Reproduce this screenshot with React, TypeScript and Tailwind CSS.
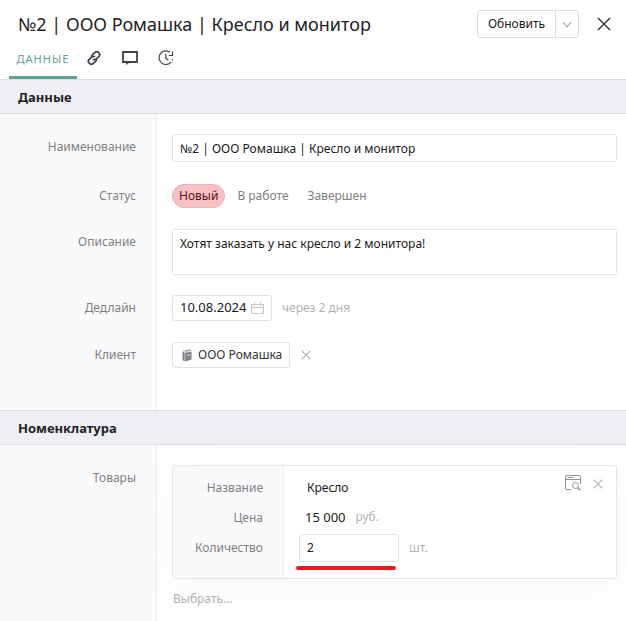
import React, { useState } from "react";

const font = "font-['Noto_Sans','Open_Sans',sans-serif]";

function CrossIcon({ size, stroke }: { size: number; stroke: number }) {
  return (
    <svg width={size} height={size} viewBox="0 0 14 14" fill="none" stroke="currentColor" strokeWidth={stroke} aria-hidden="true">
      <path d="M1 1l12 12M13 1L1 13" />
    </svg>
  );
}

function LinkIcon() {
  return (
    <svg width="16" height="16" viewBox="0 0 16 16" fill="none" stroke="#3d434b" strokeWidth="1.7" strokeLinecap="round" aria-hidden="true">
      <g transform="rotate(-42 8 8)">
        <path d="M6.600 8.800A2.900 2.900 0 0 0 9 10.200h3.200a2.900 2.900 0 0 0 0-5.800H9.200A2.900 2.900 0 0 0 7.200 5.300" />
        <path d="M9.400 7.200A2.900 2.900 0 0 0 7 5.800H3.800a2.900 2.900 0 0 0 0 5.800h3a2.900 2.900 0 0 0 2-.9" />
      </g>
    </svg>
  );
}

function ChatIcon() {
  return (
    <svg width="16" height="16" viewBox="0 0 16 16" fill="none" stroke="#3d434b" strokeWidth="1.800" aria-hidden="true">
      <path d="M1 2h14v10H1z" />
      <path d="M4 12h4l-3.500 3z" fill="#3d434b" stroke="none" />
    </svg>
  );
}

function ClockIcon() {
  return (
    <svg width="16" height="16" viewBox="0 0 16 16" fill="none" stroke="#3d434b" strokeWidth="1.200" aria-hidden="true">
      <path d="M12 2.300A6.800 6.800 0 1 0 13.300 11.800" />
      <path d="M14.200 10.300l.4-1.200" />
      <path d="M14.500 1.500v4h-3.700M7.800 4v4.500l2.500 1.500" />
    </svg>
  );
}

function CalendarIcon() {
  return (
    <svg width="13" height="13" viewBox="0 0 13 13" fill="none" stroke="#c6c6c6" className="shrink-0" aria-hidden="true">
      <path d="M.5 2.500h12v9H.5zM.5 5.500h12M3.500 0v4M9.500 0v4" />
    </svg>
  );
}

function BookIcon() {
  return (
    <svg width="10" height="13" viewBox="0 0 10 13" className="shrink-0" aria-hidden="true">
      <path d="M3.200 3.800L9.500 2.500v8L3.200 12.500z" fill="#7e8286" />
      <path d="M.5 2.500l2.200 1.300v8.700L.5 11z" fill="#7e8286" />
      <path d="M.8 2.200L6.500.8 8.500 1.400 3.200 2.900" fill="none" stroke="#8e9296" strokeWidth=".8" />
      <path d="M5.500 5.600l2-.5v1.500l-2 .5z" fill="#e8e8e8" />
    </svg>
  );
}

function PreviewIcon() {
  return (
    <svg width="16" height="16" viewBox="0 0 16 16" fill="none" stroke="#8f9296" aria-hidden="true">
      <path d="M6.500 14.500H2A1.500 1.500 0 0 1 .5 13V2A1.500 1.500 0 0 1 2 .5h12A1.500 1.500 0 0 1 15.500 2v7M.5 4.500h15M2.500 2.500h6" />
      <circle cx="10.500" cy="10.500" r="3" />
      <path d="M12.700 12.700l2.600 2.600" strokeWidth="1.500" />
    </svg>
  );
}

function SectionTitle({ children }: { children: React.ReactNode }) {
  return (
    <h2 className="h-[35px] border-y border-[#dddee0] bg-[#eeeff4] px-[18px] text-[13px] leading-[34px] font-bold text-[#222]">
      {children}
    </h2>
  );
}

function Row({ label, id, pad, children }: { label: string; id?: string; pad: string; children: React.ReactNode }) {
  return (
    <div className="flex">
      <div className={`w-[157px] shrink-0 border-r border-[#ebecf2] bg-[#f9fafc] pr-5 text-right leading-[26px] text-[#808080] ${pad}`}>
        <label htmlFor={id}>{label}</label>
      </div>
      <div className={`min-w-0 flex-1 pr-[9px] pl-[15px] ${pad}`}>{children}</div>
    </div>
  );
}

function CardLabel({ children, id }: { children: React.ReactNode; id?: string }) {
  return (
    <label htmlFor={id} className="block h-[30px] leading-[30px] text-[#808080]">
      {children}
    </label>
  );
}

export default function App() {
  const [status, setStatus] = useState("Новый");
  return (
    <main className={`min-h-screen overflow-hidden bg-white text-xs text-[#1a1a1a] ${font}`}>
      <header className="flex h-12 items-center pr-[15px] pl-[18px]">
        <h1 className="min-w-0 flex-1 truncate text-lg leading-7 text-[#222]">№2 | ООО Ромашка | Кресло и монитор</h1>
        <div className="flex h-7 shrink-0 rounded-[3px] border border-[#dcdcdc]">
          <button type="button" className="w-[78px] border-r border-[#dcdcdc]">Обновить</button>
          <button type="button" aria-label="Ещё" className="flex w-[22px] items-center justify-center text-[#888]">
            <svg width="10" height="7" viewBox="0 0 10 7" fill="none" stroke="currentColor" aria-hidden="true">
              <path d="M1 1l4 5 4-5" />
            </svg>
          </button>
        </div>
        <button type="button" aria-label="Закрыть" className="ml-[18px] text-[#333]">
          <CrossIcon size={14} stroke={1.4} />
        </button>
      </header>
      <nav className="flex h-[31px] items-start pl-[9px]">
        <button type="button" className="h-[31px] w-[68px] border-b-3 border-[#5ba298] pb-1.5 text-[11px] tracking-[1px] text-[#5ba298]">ДАННЫЕ</button>
        <div className="ml-[9px] flex gap-5 pt-0.5">
          <button type="button" aria-label="Ссылки"><LinkIcon /></button>
          <button type="button" aria-label="Комментарии"><ChatIcon /></button>
          <button type="button" aria-label="История"><ClockIcon /></button>
        </div>
      </nav>

      <section>
        <SectionTitle>Данные</SectionTitle>
        <Row label="Наименование" id="name" pad="pt-5">
          <input id="name" defaultValue="№2 | ООО Ромашка | Кресло и монитор" className="block h-7 w-full rounded-[3px] border border-[#e2e2e2] px-[7px] outline-none" />
        </Row>
        <Row label="Статус" pad="pt-[21px]">
          <div className="flex h-[26px] items-center gap-[5px]">
            {["Новый", "В работе", "Завершен"].map((s) => (
              <button
                key={s}
                type="button"
                aria-pressed={s === status}
                onClick={() => setStatus(s)}
                className={s === status ? "h-6 rounded-full border border-[#eeb0b3] bg-[#f8c2c4] px-1.5 text-[#5c0f12]" : "h-6 rounded-full border border-transparent px-1.5 text-[#808080]"}
              >
                {s}
              </button>
            ))}
          </div>
        </Row>
        <Row label="Описание" id="description" pad="pt-5">
          <textarea id="description" defaultValue="Хотят заказать у нас кресло и 2 монитора!" className="block h-[46px] w-full resize-none rounded-[3px] border border-[#e2e2e2] px-[7px] py-1 leading-5 outline-none" />
        </Row>
        <Row label="Дедлайн" id="deadline" pad="pt-5">
          <div className="flex h-[26px] items-center gap-2.5">
            <div className="flex h-[26px] w-[100px] items-center rounded-[3px] border border-[#e2e2e2] px-[7px]">
              <input id="deadline" defaultValue="10.08.2024" className="min-w-0 flex-1 text-[13px] outline-none" />
              <CalendarIcon />
            </div>
            <span className="text-[#b3b3b3]">через 2 дня</span>
          </div>
        </Row>
        <Row label="Клиент" pad="pt-[21px] pb-[42px]">
          <div className="flex h-[26px] items-center gap-[11px]">
            <button type="button" className="flex h-[26px] items-center gap-1.5 rounded-[3px] border border-[#e2e2e2] pr-[7px] pl-[9px] text-[#333]">
              <BookIcon />
              ООО Ромашка
            </button>
            <button type="button" aria-label="Убрать клиента" className="text-[#b0b0b0]">
              <CrossIcon size={10} stroke={1.6} />
            </button>
          </div>
        </Row>
      </section>

      <section>
        <SectionTitle>Номенклатура</SectionTitle>
        <Row label="Товары" pad="pt-5 pb-3">
          <div className="relative flex rounded-[3px] border border-[#e4e5e9] bg-white shadow-[0_8px_40px_rgba(0,0,0,0.04)]">
            <div className="w-[111px] shrink-0 border-r border-[#ebecf2] bg-[#f9fafc] pt-[7px] pr-5 pb-[15px] text-right">
              <CardLabel>Название</CardLabel>
              <CardLabel>Цена</CardLabel>
              <CardLabel id="quantity">Количество</CardLabel>
            </div>
            <div className="flex-1 pt-[7px] pl-[15px] leading-[30px]">
              <div className="h-[30px] pl-2">Кресло</div>
              <div className="flex h-[30px] gap-2.5 pl-1.5 leading-[28px]">
                <span className="text-[13px]">15 000</span>
                <span className="text-[#b3b3b3]">руб.</span>
              </div>
              <div className="flex h-[30px] items-center gap-2.5">
                <div className="relative">
                  <input id="quantity" defaultValue="2" className="block h-7 w-[100px] rounded-[3px] border border-[#e2e2e2] px-[7px] outline-none" />
                  <div className="absolute top-8 -left-[3px] h-1 w-[100px] rounded-full bg-[#ea1c1f]" />
                </div>
                <span className="text-[#b3b3b3]">шт.</span>
              </div>
            </div>
            <div className="flex items-start gap-3 pt-[9px] pr-[13px]">
              <button type="button" aria-label="Просмотр"><PreviewIcon /></button>
              <button type="button" aria-label="Удалить" className="pt-1 text-[#b0b0b0]"><CrossIcon size={10} stroke={1.6} /></button>
            </div>
          </div>
          <button type="button" className="mt-2.5 block pl-px leading-5 text-[#b3b3b3]">Выбрать...</button>
        </Row>
      </section>
    </main>
  );
}
